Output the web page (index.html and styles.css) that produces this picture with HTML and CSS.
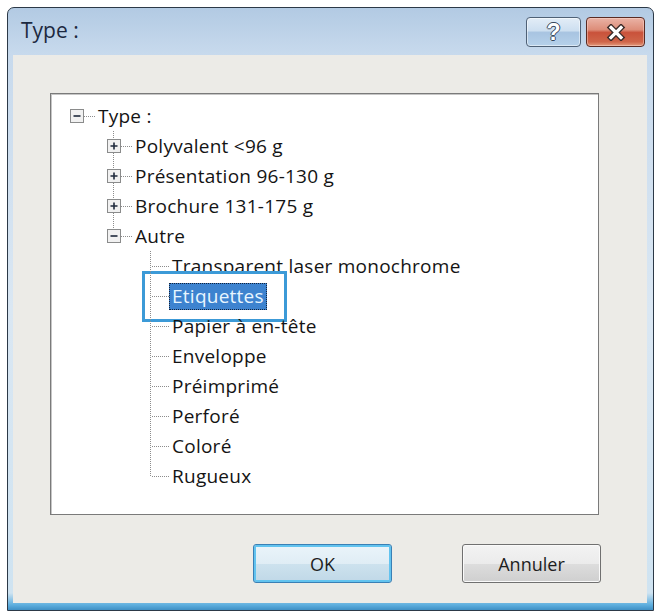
FILE: index.html
```html
<!DOCTYPE html>
<html lang="fr">
<head>
    <meta charset="UTF-8">
    <title>Type :</title>
    <link rel="stylesheet" href="styles.css">
</head>
<body>
    <div class="window">
        <!-- barre de titre -->
        <div class="titlebar">
            <span class="title">Type :</span>
            <div class="caption-buttons">
                <button class="cap-btn help">?</button>
                <button class="cap-btn close">
                    <svg width="24" height="17" viewBox="0 0 24 17">
                        <path d="M7 3.5 L17 13.5 M17 3.5 L7 13.5" stroke="#3b2b28" stroke-width="6" stroke-linecap="square"/>
                        <path d="M7 3.5 L17 13.5 M17 3.5 L7 13.5" stroke="#ffffff" stroke-width="3.2" stroke-linecap="square"/>
                    </svg>
                </button>
            </div>
        </div>

        <div class="client">
            <!-- arborescence des types -->
            <div class="tree">
                <div class="row">
                    <span class="elbow root">
                        <svg class="expander" width="14" height="14" viewBox="0 0 14 14"><rect x="0.5" y="0.5" width="13" height="13"/><path d="M3.5 7h7"/></svg>
                    </span>
                    <span class="label">Type :</span>
                </div>
                <div class="row">
                    <span class="indent"></span>
                    <span class="elbow tee">
                        <svg class="expander" width="14" height="14" viewBox="0 0 14 14"><rect x="0.5" y="0.5" width="13" height="13"/><path d="M3.5 7h7M7 3.5v7"/></svg>
                    </span>
                    <span class="label">Polyvalent &lt;96 g</span>
                </div>
                <div class="row">
                    <span class="indent"></span>
                    <span class="elbow tee">
                        <svg class="expander" width="14" height="14" viewBox="0 0 14 14"><rect x="0.5" y="0.5" width="13" height="13"/><path d="M3.5 7h7M7 3.5v7"/></svg>
                    </span>
                    <span class="label">Présentation 96-130 g</span>
                </div>
                <div class="row">
                    <span class="indent"></span>
                    <span class="elbow tee">
                        <svg class="expander" width="14" height="14" viewBox="0 0 14 14"><rect x="0.5" y="0.5" width="13" height="13"/><path d="M3.5 7h7M7 3.5v7"/></svg>
                    </span>
                    <span class="label">Brochure 131-175 g</span>
                </div>
                <div class="row">
                    <span class="indent"></span>
                    <span class="elbow ell">
                        <svg class="expander" width="14" height="14" viewBox="0 0 14 14"><rect x="0.5" y="0.5" width="13" height="13"/><path d="M3.5 7h7"/></svg>
                    </span>
                    <span class="label">Autre</span>
                </div>
                <div class="row">
                    <span class="indent"></span><span class="indent"></span>
                    <span class="elbow tee"></span>
                    <span class="label">Transparent laser monochrome</span>
                </div>
                <div class="row">
                    <span class="indent"></span><span class="indent"></span>
                    <span class="elbow tee"></span>
                    <div class="callout"></div>
                    <span class="label selected">Etiquettes</span>
                </div>
                <div class="row">
                    <span class="indent"></span><span class="indent"></span>
                    <span class="elbow tee"></span>
                    <span class="label">Papier à en-tête</span>
                </div>
                <div class="row">
                    <span class="indent"></span><span class="indent"></span>
                    <span class="elbow tee"></span>
                    <span class="label">Enveloppe</span>
                </div>
                <div class="row">
                    <span class="indent"></span><span class="indent"></span>
                    <span class="elbow tee"></span>
                    <span class="label">Préimprimé</span>
                </div>
                <div class="row">
                    <span class="indent"></span><span class="indent"></span>
                    <span class="elbow tee"></span>
                    <span class="label">Perforé</span>
                </div>
                <div class="row">
                    <span class="indent"></span><span class="indent"></span>
                    <span class="elbow tee"></span>
                    <span class="label">Coloré</span>
                </div>
                <div class="row">
                    <span class="indent"></span><span class="indent"></span>
                    <span class="elbow ell"></span>
                    <span class="label">Rugueux</span>
                </div>
            </div>

            <!-- boutons -->
            <div class="actions">
                <button class="btn default">OK</button>
                <button class="btn">Annuler</button>
            </div>
        </div>
    </div>
</body>
</html>
```

FILE: styles.css
```css
body {
    margin: 0;
    background: #fff;
    font-family: "Open Sans", "Noto Sans", sans-serif;
}
.window {
    box-sizing: border-box;
    width: 647px;
    height: 604px;
    margin: 7px 0 0 7px;
    padding: 0 6px 7px 5px;
    display: flex;
    flex-direction: column;
    border: 1px solid #2c3947;
    border-radius: 7px 7px 0 0;
    background: linear-gradient(to bottom, #b2cae3 0, #c8daed 47px, #dae7f3 300px, #cfe3f1 585px, #5daede 597px, #3f8fc4 100%);
}
.titlebar {
    height: 47px;
    display: flex;
    align-items: center;
    justify-content: space-between;
    padding: 0 2px 0 8px;
}
.title {
    font-size: 21px;
    color: #1c2940;
    margin-top: -3px;
}
.caption-buttons {
    display: flex;
    gap: 5px;
    align-self: flex-start;
    margin-top: 9px;
}
.cap-btn {
    height: 30px;
    padding: 0;
    border-radius: 4px;
    display: flex;
    align-items: center;
    justify-content: center;
}
.help {
    width: 55px;
    margin-left: -3px;
    border: 1px solid #4f6176;
    background: linear-gradient(to bottom, #e3edf7 0%, #cddff0 45%, #a8c4e1 52%, #b6d1ea 100%);
    box-shadow: inset 0 0 0 1px rgba(255,255,255,0.5);
    font: bold 23px "Liberation Sans", sans-serif;
    color: #fff;
    text-shadow: 1px 0 #39495e, -1px 0 #39495e, 0 1px #39495e, 0 -1px #39495e;
}
.close {
    width: 59px;
    border: 1px solid #5a2a22;
    background: linear-gradient(to bottom, #eab3a6 0%, #dd8d79 42%, #c9523b 52%, #cf6549 85%, #e39a7c 100%);
    box-shadow: inset 0 0 0 1px rgba(255,220,210,0.45);
}
.client {
    flex: 1;
    background: #ecebe7;
    padding: 38px 0 0 37px;
    display: flex;
    flex-direction: column;
}
.tree {
    box-sizing: border-box;
    width: 549px;
    height: 422px;
    background: #fff;
    border: 1px solid #7a7a7a;
    box-shadow: inset 1px 1px 0 #c6c6c6;
    padding: 7px 0 0 7px;
    color: #141414;
    font-size: 19px;
    letter-spacing: 0.25px;
}
.row {
    position: relative;
    height: 30px;
    display: flex;
    align-items: center;
}
.indent {
    width: 37px;
    height: 100%;
    flex: none;
}
.elbow {
    position: relative;
    z-index: 1;
    width: 37px;
    height: 100%;
    flex: none;
    display: flex;
    align-items: center;
    justify-content: center;
    background-repeat: no-repeat;
}
.elbow.root {
    background-image: repeating-linear-gradient(to right, #8c8c8c 0 1px, transparent 1px 2px);
    background-size: 17px 1px;
    background-position: 100% 15px;
}
.elbow.tee, .elbow.ell {
    background-image:
        repeating-linear-gradient(to bottom, #8c8c8c 0 1px, transparent 1px 2px),
        repeating-linear-gradient(to right, #8c8c8c 0 1px, transparent 1px 2px);
    background-size: 1px 30px, 17px 1px;
    background-position: 18px 0, 100% 15px;
}
.elbow.ell {
    background-size: 1px 16px, 17px 1px;
}
.expander rect {
    fill: #f1f1f1;
    stroke: #8a8b8b;
}
.expander path {
    stroke: #1f2a3c;
    stroke-width: 1.6;
}
.label {
    padding: 0 3px;
    line-height: 27px;
    white-space: nowrap;
}
.label.selected {
    position: relative;
    z-index: 1;
    background: #3d83cf;
    color: #e8f6ff;
    outline: 1px dotted #14233a;
    outline-offset: -1px;
}
.callout {
    position: absolute;
    left: 84px;
    top: -10px;
    width: 145px;
    height: 51px;
    box-sizing: border-box;
    border: 3px solid #3c9ad7;
    background: #fff;
}
.actions {
    display: flex;
    justify-content: flex-end;
    gap: 70px;
    padding: 29px 46px 0 0;
}
.btn {
    width: 139px;
    height: 39px;
    font-family: "Open Sans", "Noto Sans", sans-serif;
    font-size: 18px;
    color: #1e1e1e;
    border: 1px solid #707070;
    border-radius: 3px;
    background: linear-gradient(to bottom, #f3f3f3 0%, #ebebeb 50%, #dddddd 51%, #cfcfcf 100%);
    box-shadow: inset 0 0 0 1px #fafafa;
}
.btn.default {
    border-color: #3a80b5;
    background: linear-gradient(to bottom, #eaf4fa 0%, #e0edf5 50%, #cde2ee 51%, #c0d8e7 100%);
    box-shadow: inset 0 0 0 2px #62c3ef;
}
```
